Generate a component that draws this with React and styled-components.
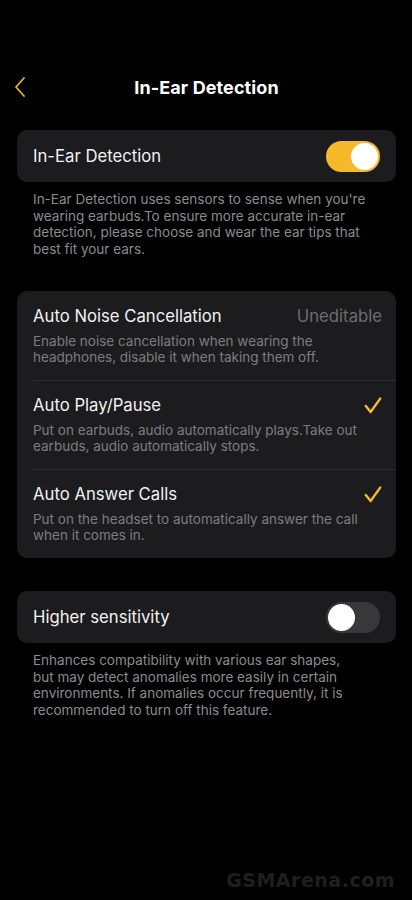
import React from 'react';
import styled, { createGlobalStyle } from 'styled-components';

const GlobalStyle = createGlobalStyle`
    html, body {
        margin: 0;
        padding: 0;
        background: #000;
    }
    body {
        font-family: Inter, "Noto Sans", sans-serif;
        -webkit-font-smoothing: antialiased;
    }
`;

const StyledPage = styled.div`
    width: 412px;
    height: 900px;
    overflow: hidden;
    background: #000;
    color: #fff;
    position: relative;
    box-sizing: border-box;
    padding: 58px 16px 0 17px;
`;

const StyledHeader = styled.header`
    height: 58px;
    display: flex;
    align-items: center;
    justify-content: center;
    position: relative;
`;

const StyledBack = styled.button`
    position: absolute;
    left: -4px;
    top: 50%;
    transform: translateY(-50%);
    background: none;
    border: 0;
    padding: 0;
    display: flex;
    cursor: pointer;
`;

const StyledTitle = styled.h1`
    margin: 0;
    font-size: 18px;
    font-weight: 700;
    letter-spacing: 0.1px;
`;

const StyledCard = styled.section`
    background: #1c1c1e;
    border-radius: 10px;
    margin-top: ${({ top }) => top}px;
`;

const StyledSwitchRow = styled.div`
    height: 52px;
    display: flex;
    align-items: center;
    justify-content: space-between;
    padding: 0 16px;
`;

const StyledLabel = styled.span`
    font-size: 16.7px;
    color: #f2f2f2;
`;

const StyledToggle = styled.span`
    width: 54px;
    height: 31px;
    border-radius: 16px;
    background: ${({ on }) => (on ? '#f6b92c' : '#38383b')};
    position: relative;
    flex-shrink: 0;
    &::after {
        content: "";
        position: absolute;
        top: 2px;
        left: ${({ on }) => (on ? '25px' : '2px')};
        width: 27px;
        height: 27px;
        border-radius: 50%;
        background: #fff;
    }
`;

const StyledNote = styled.p`
    margin: 9px 0 0;
    padding: 0 24px 0 16px;
    font-size: 13.5px;
    line-height: 16.5px;
    color: #8b8b8e;
`;

const StyledOption = styled.div`
    padding: 14px 14px 15px 16px;
    position: relative;
    & + &::before {
        content: "";
        position: absolute;
        top: 0;
        left: 16px;
        right: 0;
        height: 1px;
        background: #2c2c2e;
    }
`;

const StyledOptionHead = styled.div`
    display: flex;
    align-items: center;
    justify-content: space-between;
    height: 22px;
`;

const StyledOptionText = styled.div`
    margin-top: 6px;
    font-size: 13.5px;
    line-height: 16px;
    color: #7c7c80;
`;

const StyledStatus = styled.span`
    font-size: 16.7px;
    color: #6c6c70;
`;

const StyledWatermark = styled.div`
    position: absolute;
    right: 17px;
    bottom: 9px;
    font-family: "DejaVu Sans", sans-serif;
    font-weight: 700;
    font-size: 19px;
    letter-spacing: 0.5px;
    color: #1f1f1f;
`;

const Check = () => (
    <svg width="18" height="17" viewBox="0 0 18 17" fill="none">
        <path d="M1.8 9 L6.6 15 L16.2 1.6" stroke="#f6b92c" strokeWidth="2.4" strokeLinecap="round" strokeLinejoin="round" />
    </svg>
);

const options = [
    {
        title: 'Auto Noise Cancellation',
        text: 'Enable noise cancellation when wearing the headphones, disable it when taking them off.',
        status: 'Uneditable',
    },
    {
        title: 'Auto Play/Pause',
        text: 'Put on earbuds, audio automatically plays.Take out earbuds, audio automatically stops.',
        checked: true,
    },
    {
        title: 'Auto Answer Calls',
        text: 'Put on the headset to automatically answer the call when it comes in.',
        checked: true,
    },
];

const App = () => (
    <StyledPage>
        <GlobalStyle />
        <StyledHeader>
            <StyledBack aria-label="Back">
                <svg width="14" height="22" viewBox="0 0 14 22" fill="none">
                    <path d="M11 2 L3 11 L11 20" stroke="#e7b133" strokeWidth="1.8" strokeLinecap="round" strokeLinejoin="round" />
                </svg>
            </StyledBack>
            <StyledTitle>In-Ear Detection</StyledTitle>
        </StyledHeader>

        <StyledCard top={14}>
            <StyledSwitchRow>
                <StyledLabel>In-Ear Detection</StyledLabel>
                <StyledToggle on />
            </StyledSwitchRow>
        </StyledCard>
        <StyledNote>
            In-Ear Detection uses sensors to sense when you're wearing earbuds.To ensure more accurate in-ear detection, please choose and wear the ear tips that best fit your ears.
        </StyledNote>

        <StyledCard top={34}>
            {options.map((o) => (
                <StyledOption key={o.title}>
                    <StyledOptionHead>
                        <StyledLabel>{o.title}</StyledLabel>
                        {o.status && <StyledStatus>{o.status}</StyledStatus>}
                        {o.checked && <Check />}
                    </StyledOptionHead>
                    <StyledOptionText>{o.text}</StyledOptionText>
                </StyledOption>
            ))}
        </StyledCard>

        <StyledCard top={33}>
            <StyledSwitchRow>
                <StyledLabel>Higher sensitivity</StyledLabel>
                <StyledToggle />
            </StyledSwitchRow>
        </StyledCard>
        <StyledNote>
            Enhances compatibility with various ear shapes,<br />
            but may detect anomalies more easily in certain environments. If anomalies occur frequently, it is recommended to turn off this feature.
        </StyledNote>

        <StyledWatermark>GSMArena.com</StyledWatermark>
    </StyledPage>
);

export default App;
